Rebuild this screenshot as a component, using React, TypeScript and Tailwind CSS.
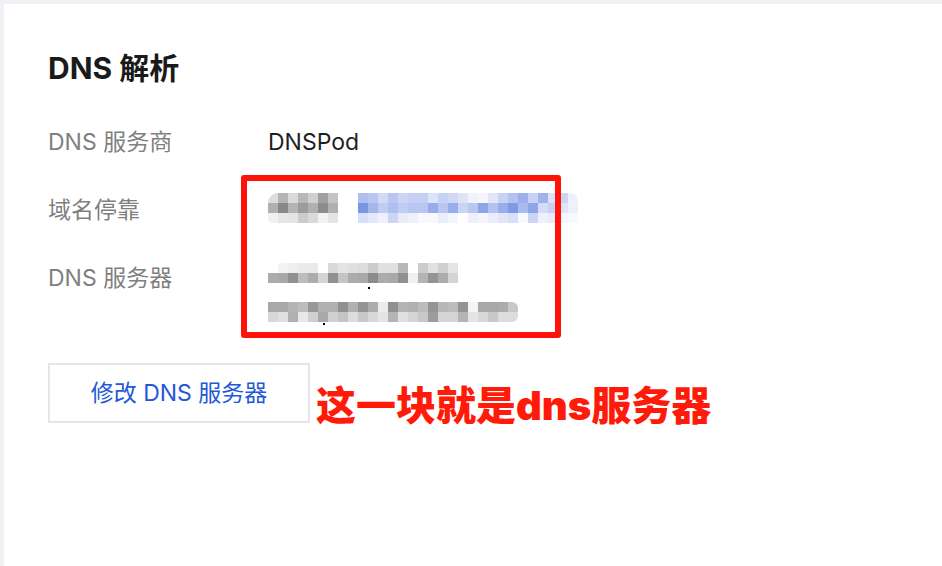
import React from 'react';

type MosaicProps = {
  rows: string[][];
  className?: string;
};

// pixelated (redacted) value, drawn as 10px colour blocks
const Mosaic: React.FC<MosaicProps> = ({ rows, className }) => (
  <div className={`flex flex-col ${className ?? ''}`}>
    {rows.map((row, i) => (
      <div key={i} className="flex">
        {row.map((c, j) => (
          <div key={j} className="h-[10px] w-[10px]" style={{ backgroundColor: c }} />
        ))}
      </div>
    ))}
  </div>
);

const parkGray = [
  ['#dcdcdc', '#b4b4b4', '#dadada', '#b8b8b8', '#d0d0d0', '#a0a0a0', '#c4c4c4'],
  ['#b0b0b0', '#888888', '#b4b4b4', '#9c9c9c', '#b0b0b0', '#8c8c8c', '#b0b0b0'],
  ['#f0f0f0', '#e6e6e6', '#e4e4e4', '#cccccc', '#dadada', '#f2f2f2', '#e4e4e4'],
];

const parkBlue = [
  ['#b0c0ee', '#b8c6f0', '#d0daf6', '#b8c6f0', '#ccd6f4', '#c6d0f4', '#c6d0f4', '#dde4f8', '#c8d2f4', '#d0d8f4', '#dee4f8', '#f0f2fc', '#f4f6fc', '#e0e6f8', '#c8d2f4', '#b4c2f0', '#9eb0ec', '#c8d2f4', '#9eb2ec', '#dce2f8', '#ccd6f4', '#eef0fc'],
  ['#7896e4', '#a4b6ec', '#c0cdf2', '#b0c0ee', '#c0cdf2', '#b8c6f0', '#b8c6f0', '#98aeea', '#b8c6f0', '#98aeea', '#cad4f4', '#b8c6f0', '#8ea6e8', '#b4c2f0', '#98aeea', '#7e9ae6', '#aabaee', '#8ea6e8', '#d4dcf6', '#c6d0f4', '#dfe5f8', '#eef0fc'],
  ['#d8e0f8', '#e4e9fa', '#eef1fc', '#ccd6f4', '#e8ecfa', '#eef1fc', '#f8f9fe', '#f8f9fe', '#eaeefa', '#f4f6fe', '#ffffff', '#eef1fc', '#f4f6fe', '#eaeefa', '#e0e6f8', '#d8e0f8', '#f8f9fe', '#ccd6f4', '#eef1fc', '#e8ecfa', '#f4f6fe', '#f8f9fe'],
];

const ns1 = [
  ['#ffffff', '#f4f4f4', '#eeeeee', '#eaeaea', '#eaeaea', '#ffffff', '#dadada', '#e4e4e4', '#e0e0e0', '#dcdcdc', '#cccccc', '#e0e0e0', '#e0e0e0', '#b8b8b8', '#ffffff', '#cccccc', '#e0e0e0', '#d0d0d0', '#e4e4e4'],
  ['#acacac', '#a8a8a8', '#909090', '#bcbcbc', '#acacac', '#d4d4d4', '#909090', '#c4c4c4', '#acacac', '#a8a8a8', '#8c8c8c', '#acacac', '#a8a8a8', '#909090', '#f0f0f0', '#b4b4b4', '#949494', '#acacac', '#d4d4d4'],
];

const ns2 = [
  ['#a8a8a8', '#a8a8a8', '#b4b4b4', '#bcbcbc', '#989898', '#b0b0b0', '#b0b0b0', '#909090', '#b0b0b0', '#949494', '#acacac', '#ececec', '#909090', '#b4b4b4', '#b0b0b0', '#bcbcbc', '#949494', '#b8b8b8', '#bcbcbc', '#949494', '#f4f4f4', '#a8a8a8', '#a8a8a8', '#acacac', '#c8c8c8'],
  ['#d8d8d8', '#e0e0e0', '#b0b0b0', '#e8e8e8', '#d0d0d0', '#a8a8a8', '#d0d0d0', '#c4c4c4', '#dcdcdc', '#c8c8c8', '#d8d8d8', '#e4e4e4', '#b4b4b4', '#e0e0e0', '#d4d4d4', '#c8c8c8', '#9c9c9c', '#d4d4d4', '#d4d4d4', '#b4b4b4', '#e4e4e4', '#d8d8d8', '#c8c8c8', '#dcdcdc', '#dcdcdc'],
];

const font = { fontFamily: 'Inter, "Noto Sans CJK SC", sans-serif' };

export default function App() {
  return (
    <div className="relative h-[566px] w-[942px] overflow-hidden bg-[#f0f1f5] pl-[4px] pt-[4px]" style={font}>
      <div className="h-full w-full bg-white pl-[44px] pt-[44px]">
        <h2 className="text-[30px] font-bold leading-[40px] text-[#1a1a1a]">DNS 解析</h2>

        <div className="mt-[37px] flex flex-col gap-[34px] text-[23px] leading-[34px]">
          <div className="flex">
            <div className="w-[220px] text-[#7f7f7f]">DNS 服务商</div>
            <div className="text-[#1f1f1f]">DNSPod</div>
          </div>

          <div className="flex">
            <div className="w-[220px] text-[#7f7f7f]">域名停靠</div>
            <div className="flex gap-[20px]">
              <Mosaic rows={parkGray} className="overflow-hidden rounded-l-[10px]" />
              <Mosaic rows={parkBlue} className="overflow-hidden rounded-r-[8px]" />
            </div>
          </div>

          <div className="flex">
            <div className="w-[220px] text-[#7f7f7f]">DNS 服务器</div>
            <div className="relative flex flex-col">
              <div className="h-[34px] pt-[2px]">
                <Mosaic rows={ns1} />
              </div>
              <div className="h-[34px] pt-[7px]">
                <Mosaic rows={ns2} className="overflow-hidden rounded-r-[6px]" />
              </div>
              <span className="absolute left-[100px] top-[26px] h-[2px] w-[2px] bg-black" />
              <span className="absolute left-[55px] top-[62px] h-[2px] w-[2px] bg-black" />
            </div>
          </div>
        </div>

        <div className="mt-[34px] flex items-start">
          <button className="h-[60px] w-[262px] border-2 border-[#e4e6ed] bg-white text-[23px] text-[#2358d8]">
            修改 DNS 服务器
          </button>
          <span className="ml-[6px] mt-[19px] text-[40px] font-black leading-[48px] text-[#ff1a0a]">
            这一块就是dns服务器
          </span>
        </div>
      </div>

      {/* red annotation frame */}
      <div className="pointer-events-none absolute left-[241px] top-[175px] h-[163px] w-[320px] rounded-[3px] border-[6px] border-[#ff1208]" />
    </div>
  );
}
